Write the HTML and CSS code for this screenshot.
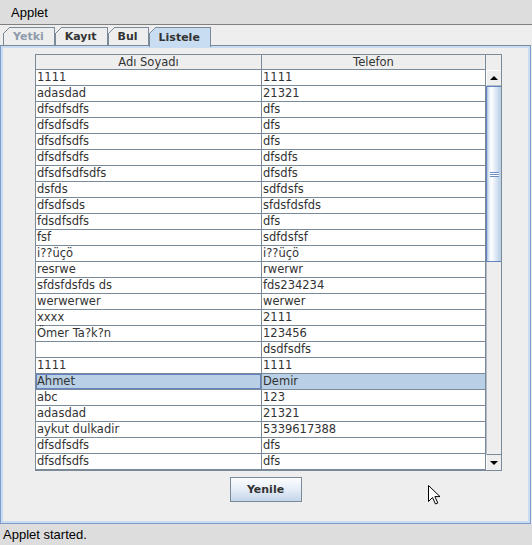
FILE: index.html
```html
<!DOCTYPE html>
<html lang="tr">
<head>
<meta charset="utf-8">
<title>Applet</title>
<link rel="stylesheet" href="styles.css">
</head>
<body>
<div class="titlebar">Applet</div>
<div class="tabstrip">
  <div class="tab disabled">Yetki</div>
  <div class="tab">Kayıt</div>
  <div class="tab">Bul</div>
  <div class="tab selected">Listele</div>
</div>
<div class="panel">
  <div class="scrollpane">
    <div class="table">
      <div class="thead">
        <div class="th">Adı Soyadı</div>
        <div class="th">Telefon</div>
      </div>
      <div class="row"><div class="td">1111</div><div class="td">1111</div></div>
      <div class="row"><div class="td">adasdad</div><div class="td">21321</div></div>
      <div class="row"><div class="td">dfsdfsdfs</div><div class="td">dfs</div></div>
      <div class="row"><div class="td">dfsdfsdfs</div><div class="td">dfs</div></div>
      <div class="row"><div class="td">dfsdfsdfs</div><div class="td">dfs</div></div>
      <div class="row"><div class="td">dfsdfsdfs</div><div class="td">dfsdfs</div></div>
      <div class="row"><div class="td">dfsdfsdfsdfs</div><div class="td">dfsdfs</div></div>
      <div class="row"><div class="td">dsfds</div><div class="td">sdfdsfs</div></div>
      <div class="row"><div class="td">dfsdfsds</div><div class="td">sfdsfdsfds</div></div>
      <div class="row"><div class="td">fdsdfsdfs</div><div class="td">dfs</div></div>
      <div class="row"><div class="td">fsf</div><div class="td">sdfdsfsf</div></div>
      <div class="row"><div class="td">i??üçö</div><div class="td">i??üçö</div></div>
      <div class="row"><div class="td">resrwe</div><div class="td">rwerwr</div></div>
      <div class="row"><div class="td">sfdsfdsfds ds</div><div class="td">fds234234</div></div>
      <div class="row"><div class="td">werwerwer</div><div class="td">werwer</div></div>
      <div class="row"><div class="td">xxxx</div><div class="td">2111</div></div>
      <div class="row"><div class="td">Ömer Ta?k?n</div><div class="td">123456</div></div>
      <div class="row"><div class="td"></div><div class="td">dsdfsdfs</div></div>
      <div class="row"><div class="td">1111</div><div class="td">1111</div></div>
      <div class="row selected"><div class="td focus">Ahmet</div><div class="td">Demir</div></div>
      <div class="row"><div class="td">abc</div><div class="td">123</div></div>
      <div class="row"><div class="td">adasdad</div><div class="td">21321</div></div>
      <div class="row"><div class="td">aykut dulkadir</div><div class="td">5339617388</div></div>
      <div class="row"><div class="td">dfsdfsdfs</div><div class="td">dfs</div></div>
      <div class="row"><div class="td">dfsdfsdfs</div><div class="td">dfs</div></div>
    </div>
    <div class="vscroll">
      <div class="corner"></div>
      <div class="sbtn"><span class="arrow-up"></span></div>
      <div class="thumb"><div class="grip"></div></div>
      <div class="track"></div>
      <div class="sbtn down"><span class="arrow-down"></span></div>
    </div>
  </div>
  <div class="actions">
    <button class="button">Yenile</button>
  </div>
</div>
<div class="status">Applet started.</div>
<svg class="cursor" width="13" height="20" viewBox="0 0 13 20">
  <path d="M0.5 0.5 L0.5 16.5 L4.5 12.5 L7.5 19 L9.8 18 L6.9 11.6 L12 11.6 Z" fill="#fff" stroke="#000" stroke-width="1" stroke-linejoin="miter"/>
</svg>
</body>
</html>
```

FILE: styles.css
```css
* { box-sizing: border-box; }
html, body { margin: 0; padding: 0; }
body {
  width: 532px;
  height: 545px;
  background: #eeeeee;
  font-family: "DejaVu Sans", "Noto Sans", sans-serif;
  color: #333333;
  overflow: hidden;
  position: relative;
}

.titlebar {
  height: 25px;
  background: #dddddd;
  border-bottom: 1px solid #808080;
  font: 13px "Liberation Sans", Arial, sans-serif;
  color: #000;
  padding-left: 11px;
  display: flex;
  align-items: center;
}

.tabstrip {
  height: 20px;
  display: flex;
  align-items: flex-end;
  padding-left: 3px;
}
.tab {
  position: relative;
  height: 18px;
  border: 1px solid #7a8a99;
  border-bottom: none;
  background: #eeeeee;
  font-weight: bold;
  font-size: 11px;
  padding: 0 10px 0 9px;
  display: flex;
  align-items: center;
  color: #333333;
}
.tab::before {
  content: "";
  position: absolute;
  left: -1px;
  top: -1px;
  width: 7px;
  height: 7px;
  background: linear-gradient(to bottom right,
    #eeeeee calc(50% - 0.6px),
    #7a8a99 calc(50% - 0.6px),
    #7a8a99 calc(50% + 0.6px),
    transparent calc(50% + 0.6px));
}
.tab.disabled { color: #8e9baa; }
.tab.selected {
  background: #c8ddf2;
  height: 20px;
  margin-bottom: -2px;
  z-index: 1;
}

.panel {
  height: 479px;
  margin-right: 1px;
  border: 1px solid #7d9bcb;
  border-top-color: #7a8a99;
  box-shadow: inset 0 0 0 2px #c8ddf2;
  padding-top: 8px;
  display: flex;
  flex-direction: column;
}

.scrollpane {
  margin-left: 34px;
  width: 467px;
  height: 417px;
  border: 1px solid #7a8a99;
  display: flex;
  background: #ffffff;
}

.table {
  width: 450px;
  display: flex;
  flex-direction: column;
}
.thead {
  display: grid;
  grid-template-columns: 226px 224px;
  height: 15px;
  background: #eeeeee;
}
.th {
  border-right: 1px solid #7a8a99;
  border-bottom: 1px solid #7a8a99;
  text-align: center;
  font-size: 11.5px;
  line-height: 14px;
  color: #333333;
}
.row {
  display: grid;
  grid-template-columns: 226px 224px;
  height: 16px;
}
.td {
  border-right: 1px solid #7a8a99;
  border-bottom: 1px solid #7a8a99;
  padding-left: 1px;
  font-size: 11.5px;
  line-height: 15px;
  white-space: nowrap;
  color: #333333;
}
.row.selected .td { background: #b8cfe5; }
.td.focus { box-shadow: inset 0 0 0 1px #6382bf; }

.vscroll {
  width: 15px;
  display: flex;
  flex-direction: column;
  background: #eeeeee;
}
.corner { height: 15px; background: #eeeeee; }
.sbtn {
  height: 16px;
  background: #eeeeee;
  border-top: 1px solid #ffffff;
  border-left: 1px solid #ffffff;
  border-bottom: 1px solid #b4bcc4;
  display: flex;
  align-items: center;
  justify-content: center;
}
.sbtn.down { border-top: 1px solid #7a8a99; border-bottom: none; }
.arrow-up {
  width: 0; height: 0;
  border-left: 4px solid transparent;
  border-right: 4px solid transparent;
  border-bottom: 4px solid #000;
}
.arrow-down {
  width: 0; height: 0;
  border-left: 4px solid transparent;
  border-right: 4px solid transparent;
  border-top: 4px solid #000;
}
.thumb {
  height: 176px;
  border-left: 1px solid #6382bf;
  border-top: 1px solid #6382bf;
  border-bottom: 1px solid #6382bf;
  background: linear-gradient(to right, #a9c0dd 0%, #e4edf7 15%, #ffffff 30%, #e6eef7 55%, #c4d7ea 85%, #b8cfe5 100%);
  display: flex;
  align-items: center;
  justify-content: center;
}
.grip {
  width: 9px;
  height: 5px;
  background: repeating-linear-gradient(to bottom, #6f8fc4 0 1px, #ffffff 1px 2px);
}
.track {
  height: 192px;
  background: #eeeeee;
  border-left: 1px solid #b4bcc4;
}

.actions {
  display: flex;
  justify-content: center;
  padding-top: 6px;
}
.button {
  width: 72px;
  height: 25px;
  margin: 0;
  padding: 0;
  border: 1px solid #7a8a99;
  background: linear-gradient(to bottom, #fbfcfe 0%, #e8eff8 45%, #c4d6ea 100%);
  font-family: "DejaVu Sans", sans-serif;
  font-weight: bold;
  font-size: 11px;
  color: #333333;
}

.status {
  height: 21px;
  background: #dddddd;
  font: 13px "Liberation Sans", Arial, sans-serif;
  color: #000;
  padding-left: 3px;
  display: flex;
  align-items: center;
}

.cursor {
  position: absolute;
  left: 428px;
  top: 485px;
}
```
